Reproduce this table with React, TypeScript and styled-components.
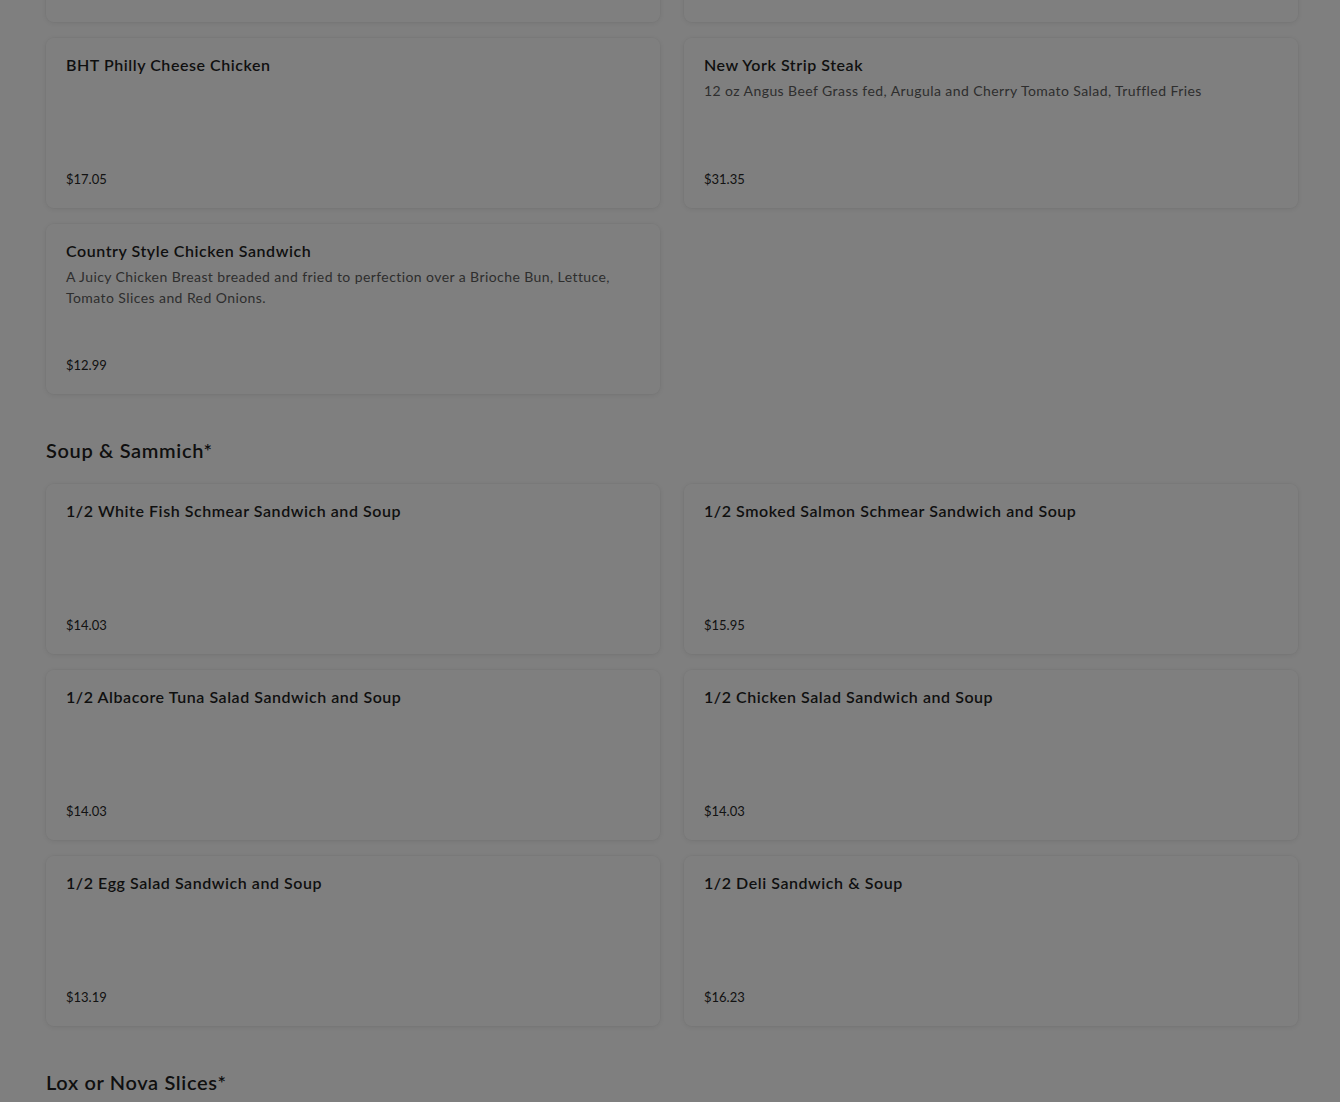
import React from "react";
import styled, { createGlobalStyle } from "styled-components";

const GlobalStyle = createGlobalStyle`
  html, body {
    margin: 0;
    padding: 0;
    background: #ffffff;
    font-family: "Lato", "Liberation Sans", sans-serif;
    color: #202020;
    overflow: hidden;
  }
`;

const Page = styled.div`
  height: 1102px;
  overflow: hidden;
  padding: 0 42px 0 46px;
`;

const Menu = styled.div`
  margin-top: -148px;
`;

const Section = styled.section`
  display: flex;
  flex-direction: column;
`;

const SectionTitle = styled.h2`
  margin: 42px 0 20px;
  font-size: 20px;
  line-height: 28px;
  font-weight: 600;
  letter-spacing: 0.65px;
  color: #1f1f1f;
`;

const Grid = styled.div`
  display: grid;
  grid-template-columns: 1fr 1fr;
  column-gap: 24px;
  row-gap: 16px;
`;

const Card = styled.div`
  height: 170px;
  box-sizing: border-box;
  padding: 15px 20px 19px;
  background: #ffffff;
  border-radius: 8px;
  box-shadow: 0 1px 6px rgba(0, 0, 0, 0.09), 0 0 0 1px rgba(0, 0, 0, 0.02);
  display: flex;
  flex-direction: column;
`;

const ItemName = styled.h3`
  margin: 0;
  font-size: 16px;
  line-height: 24px;
  font-weight: 600;
  letter-spacing: 0.55px;
  color: #1f1f1f;
`;

const ItemDesc = styled.p`
  margin: 3px 0 0;
  font-size: 14px;
  line-height: 21px;
  letter-spacing: 0.42px;
  color: #5c5c5c;
`;

const Price = styled.span`
  margin-top: auto;
  font-size: 13px;
  line-height: 20px;
  color: #262626;
`;

const Overlay = styled.div`
  position: fixed;
  inset: 0;
  background: rgba(0, 0, 0, 0.5);
`;

type Item = { name: string; desc?: string; price: string };

const sandwiches: Item[] = [
  { name: "BHT Chicken Sandwich", price: "$14.95" },
  { name: "BHT Burger", price: "$16.95" },
  { name: "BHT Philly Cheese Chicken", price: "$17.05" },
  {
    name: "New York Strip Steak",
    desc: "12 oz Angus Beef Grass fed, Arugula and Cherry Tomato Salad, Truffled Fries",
    price: "$31.35",
  },
  {
    name: "Country Style Chicken Sandwich",
    desc: "A Juicy Chicken Breast breaded and fried to perfection over a Brioche Bun, Lettuce, Tomato Slices and Red Onions.",
    price: "$12.99",
  },
];

const soup: Item[] = [
  { name: "1/2 White Fish Schmear Sandwich and Soup", price: "$14.03" },
  { name: "1/2 Smoked Salmon Schmear Sandwich and Soup", price: "$15.95" },
  { name: "1/2 Albacore Tuna Salad Sandwich and Soup", price: "$14.03" },
  { name: "1/2 Chicken Salad Sandwich and Soup", price: "$14.03" },
  { name: "1/2 Egg Salad Sandwich and Soup", price: "$13.19" },
  { name: "1/2 Deli Sandwich & Soup", price: "$16.23" },
];

const ItemCard = ({ item }: { item: Item }) => (
  <Card>
    <ItemName>{item.name}</ItemName>
    {item.desc && <ItemDesc>{item.desc}</ItemDesc>}
    <Price>{item.price}</Price>
  </Card>
);

const App: React.FC = () => {
  return (
    <>
      <GlobalStyle />
      <Page>
        <Menu>
          <Section>
            <Grid>
              {sandwiches.map((item) => (
                <ItemCard key={item.name} item={item} />
              ))}
            </Grid>
          </Section>
          <Section>
            <SectionTitle>Soup &amp; Sammich*</SectionTitle>
            <Grid>
              {soup.map((item) => (
                <ItemCard key={item.name} item={item} />
              ))}
            </Grid>
          </Section>
          <Section>
            <SectionTitle>Lox or Nova Slices*</SectionTitle>
          </Section>
        </Menu>
      </Page>
      <Overlay />
    </>
  );
};

export default App;
